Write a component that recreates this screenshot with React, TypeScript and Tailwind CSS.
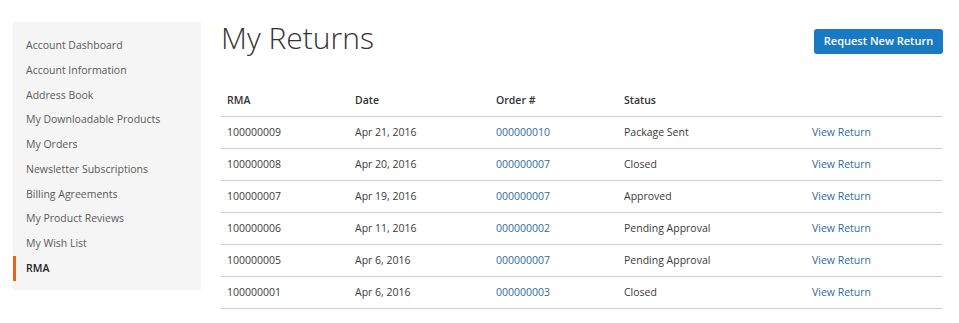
import React from "react";

const nav = [
  "Account Dashboard",
  "Account Information",
  "Address Book",
  "My Downloadable Products",
  "My Orders",
  "Newsletter Subscriptions",
  "Billing Agreements",
  "My Product Reviews",
  "My Wish List",
];

const rows = [
  ["100000009", "Apr 21, 2016", "000000010", "Package Sent"],
  ["100000008", "Apr 20, 2016", "000000007", "Closed"],
  ["100000007", "Apr 19, 2016", "000000007", "Approved"],
  ["100000006", "Apr 11, 2016", "000000002", "Pending Approval"],
  ["100000005", "Apr 6, 2016", "000000007", "Pending Approval"],
  ["100000001", "Apr 6, 2016", "000000003", "Closed"],
];

export default function App() {
  return (
    <div
      className="w-[959px] h-[323px] bg-white flex pl-[13px] pt-[22px] text-[#3a3a3a]"
      style={{ fontFamily: '"Open Sans", "Liberation Sans", sans-serif' }}
    >
      <div className="w-[188px] h-[268px] bg-[#f5f5f5] pt-[11.5px] flex flex-col">
        {nav.map((n) => (
          <div
            key={n}
            className="h-[24.75px] flex items-center pl-[13px] text-[10.5px] text-[#5a5a5a]"
          >
            {n}
          </div>
        ))}
        <div className="h-[24.75px] flex items-center pl-[10px] border-l-[3px] border-[#e8631e] text-[10.5px] font-semibold text-[#222]">
          RMA
        </div>
      </div>
      <div className="ml-[20px] w-[721px] flex flex-col">
        <div className="flex justify-between items-start">
          <h1 className="text-[30px] leading-[33px] font-light text-[#333] -mt-[1px]">
            My Returns
          </h1>
          <button className="mt-[7px] mr-[-1px] h-[25px] w-[129px] bg-[#1979c3] rounded-[3px] text-white text-[11px] font-semibold">
            Request New Return
          </button>
        </div>
        <div className="mt-[31px] text-[10.5px]">
          <div className="flex h-[32px] items-center border-b border-[#cfcfcf] font-semibold text-[#333]">
            <div className="w-[128px] pl-[6px]">RMA</div>
            <div className="w-[141px] pl-[6px]">Date</div>
            <div className="w-[128px] pl-[6px]">Order #</div>
            <div className="w-[188px] pl-[6px]">Status</div>
            <div className="flex-1"></div>
          </div>
          {rows.map((r) => (
            <div
              key={r[0]}
              className="flex h-[32px] items-center border-b border-[#cfcfcf]"
            >
              <div className="w-[128px] pl-[6px]">{r[0]}</div>
              <div className="w-[141px] pl-[6px]">{r[1]}</div>
              <div className="w-[128px] pl-[6px] text-[#2f6aa3]">{r[2]}</div>
              <div className="w-[188px] pl-[6px]">{r[3]}</div>
              <div className="flex-1 pl-[6px] text-[#2f6aa3]">View Return</div>
            </div>
          ))}
        </div>
      </div>
    </div>
  );
}
